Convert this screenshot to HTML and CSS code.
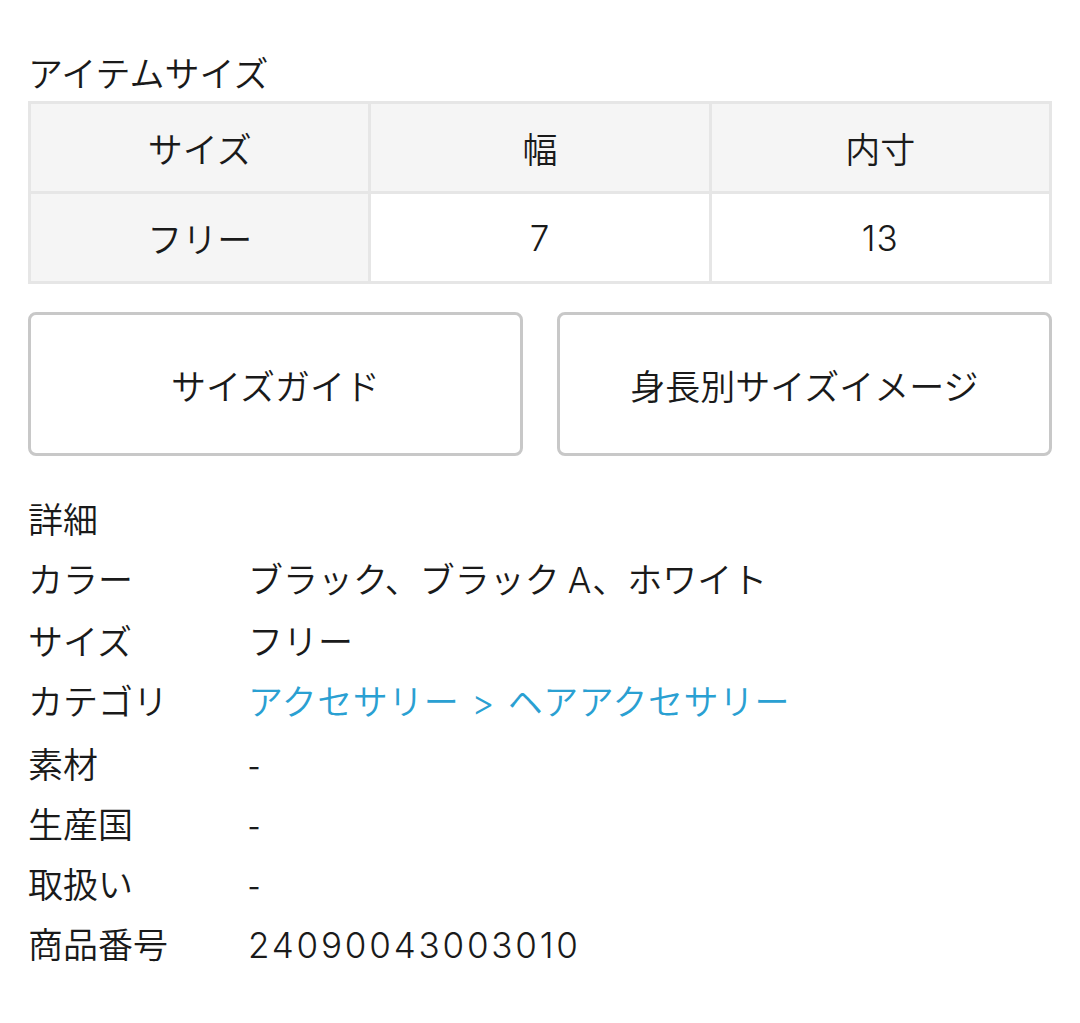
FILE: index.html
```html
<!DOCTYPE html>
<html lang="ja">
<head>
<meta charset="utf-8">
<link rel="stylesheet" href="styles.css">
</head>
<body>
<div class="page">
  <h2 class="title">アイテムサイズ</h2>
  <div class="size-table">
    <div class="cell head">サイズ</div>
    <div class="cell head">幅</div>
    <div class="cell head">内寸</div>
    <div class="cell head">フリー</div>
    <div class="cell"><span class="num">7</span></div>
    <div class="cell"><span class="num">13</span></div>
  </div>
  <div class="buttons">
    <a class="btn">サイズガイド</a>
    <a class="btn">身長別サイズイメージ</a>
  </div>
  <h2 class="subtitle">詳細</h2>
  <dl class="details">
    <div class="row"><dt>カラー</dt><dd>ブラック、ブラック <span class="num">A</span>、ホワイト</dd></div>
    <div class="row"><dt>サイズ</dt><dd>フリー</dd></div>
    <div class="row"><dt>カテゴリ</dt><dd><a class="link">アクセサリー <span class="num sep">&gt;</span> ヘアアクセサリー</a></dd></div>
    <div class="row"><dt>素材</dt><dd>-</dd></div>
    <div class="row"><dt>生産国</dt><dd>-</dd></div>
    <div class="row"><dt>取扱い</dt><dd>-</dd></div>
    <div class="row"><dt>商品番号</dt><dd><span class="num code">24090043003010</span></dd></div>
  </dl>
</div>
</body>
</html>
```

FILE: styles.css
```css
html, body {
  margin: 0;
  padding: 0;
  background: #ffffff;
}
body {
  font-family: "Noto Sans CJK JP", "Noto Sans", sans-serif;
  color: #1a1a1a;
  font-size: 35px;
  font-weight: 350;
}
.page {
  padding: 48px 28px 40px;
}
.title {
  font-size: 35px;
  font-weight: 350;
  line-height: 48px;
  margin: 0 0 5px;
}
.size-table {
  display: grid;
  grid-template-columns: 1fr 1fr 1fr;
  grid-auto-rows: 87px;
  gap: 3px;
  padding: 3px;
  background: #e6e6e6;
}
.cell {
  background: #ffffff;
  display: flex;
  align-items: center;
  justify-content: center;
}
.cell.head {
  background: #f5f5f5;
}
.num {
  font-family: Inter, "Noto Sans", sans-serif;
  font-weight: 300;
  letter-spacing: 1px;
}
.num.code {
  letter-spacing: 2.8px;
}
.num.sep {
  margin: 0 4px;
}
.buttons {
  display: flex;
  gap: 34px;
  margin-top: 28px;
}
.btn {
  flex: 1;
  height: 138px;
  border: 3px solid #c8c8c8;
  border-radius: 8px;
  display: flex;
  align-items: center;
  justify-content: center;
  color: #1a1a1a;
}
.subtitle {
  font-size: 35px;
  font-weight: 350;
  line-height: 61px;
  margin: 31px 0 0;
}
.details {
  margin: 0;
}
.row {
  display: flex;
  line-height: 60.2px;
}
.row dt {
  width: 220px;
  flex: none;
}
.row dd {
  margin: 0;
}
.link {
  color: #2aa0d2;
  letter-spacing: 0.5px;
}
```
